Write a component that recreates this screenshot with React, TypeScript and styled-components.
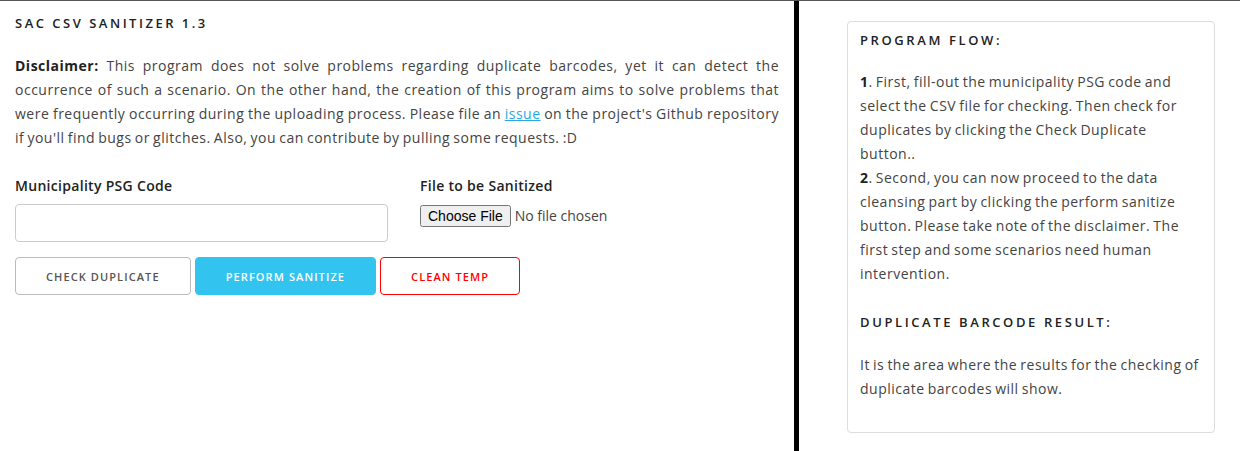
import { FC } from 'react';
import styled, { createGlobalStyle, css } from 'styled-components';

const GlobalStyle = createGlobalStyle`
  html, body {
    margin: 0;
    padding: 0;
    background: #fff;
  }
  body {
    font-family: 'Open Sans', Lato, sans-serif;
    font-size: 14px;
    letter-spacing: 0.3px;
    color: #444;
  }
  * {
    box-sizing: border-box;
  }
`;

// body copy set a touch looser, with tighter word gaps
const bodyCopy = css`
  line-height: 24px;
  letter-spacing: 0.5px;
  word-spacing: -1px;

  b {
    font-weight: 700;
    color: #222;
  }
`;

const Page = styled.div`
  display: grid;
  grid-template-columns: 794px 5px 1fr;
  min-height: 451px;
  border-top: 1px solid #555;
`;

const Divider = styled.div`
  background: #000;
`;

const Main = styled.section`
  padding: 11px 15px 0 15px;
`;

const Title = styled.h1`
  margin: 0;
  font-size: 13px;
  line-height: 22px;
  font-weight: 600;
  letter-spacing: 2.5px;
  color: #222;
`;

const Disclaimer = styled.p`
  ${bodyCopy}
  margin: 20px 0 0;
  text-align: justify;
  width: 764px;

  a {
    color: #2aa9e0;
    text-decoration: underline;
  }
`;

const FormRow = styled.div`
  display: grid;
  grid-template-columns: 373px 1fr;
  column-gap: 32px;
  margin-top: 26px;
`;

const Field = styled.div`
  display: flex;
  flex-direction: column;
  gap: 8px;
`;

const Label = styled.label`
  font-size: 14px;
  line-height: 20px;
  font-weight: 600;
  color: #222;
`;

const TextInput = styled.input`
  height: 38px;
  border: 1px solid #ccc;
  border-radius: 4px;
  padding: 0 12px;
  font: inherit;
`;

const FileInput = styled.input`
  font: inherit;
  color: #444;
  margin-top: 1px;
`;

const Actions = styled.div`
  display: flex;
  gap: 4px;
  margin-top: 15px;
`;

type Variant = 'default' | 'primary' | 'danger';

const Button = styled.button<{ $variant?: Variant }>`
  height: 38px;
  padding: 0 30px;
  border-radius: 4px;
  font-family: inherit;
  font-size: 11px;
  font-weight: 600;
  letter-spacing: 1.1px;
  text-transform: uppercase;
  cursor: pointer;
  background: #fff;
  border: 1px solid #bbb;
  color: #555;

  ${({ $variant }) => $variant === 'primary' && css`
    background: #33c3ef;
    border-color: #33c3ef;
    color: #fff;
  `}

  ${({ $variant }) => $variant === 'danger' && css`
    border-color: #f00;
    color: #f00;
  `}
`;

const Aside = styled.aside`
  padding: 20px 25px 0 48px;
`;

const Card = styled.div`
  border: 1px solid #ddd;
  border-radius: 4px;
  height: 412px;
  padding: 8px 15px 0 12px;
`;

const CardHeading = styled.h2<{ $top?: number }>`
  margin: ${({ $top = 0 }) => $top}px 0 0;
  font-size: 13px;
  line-height: 20px;
  font-weight: 600;
  letter-spacing: 2.6px;
  color: #222;
`;

const CardText = styled.p<{ $top: number }>`
  ${bodyCopy}
  margin: ${({ $top }) => $top}px 0 0;
`;

const App: FC = () => {
  return <>
    <GlobalStyle />
    <Page>
      <Main>
        <Title>SAC CSV SANITIZER 1.3</Title>
        <Disclaimer>
          <b>Disclaimer:</b> This program does not solve problems regarding duplicate barcodes, yet it can detect the occurrence of such a scenario. On the other hand, the creation of this program aims to solve problems that were frequently occurring during the uploading process. Please file an <a href="#">issue</a> on the project's Github repository if you'll find bugs or glitches. Also, you can contribute by pulling some requests. :D
        </Disclaimer>

        <FormRow>
          <Field>
            <Label htmlFor="psg">Municipality PSG Code</Label>
            <TextInput id="psg" type="text" />
          </Field>
          <Field>
            <Label htmlFor="csv">File to be Sanitized</Label>
            <FileInput id="csv" type="file" />
          </Field>
        </FormRow>

        <Actions>
          <Button>Check Duplicate</Button>
          <Button $variant="primary">Perform Sanitize</Button>
          <Button $variant="danger">Clean Temp</Button>
        </Actions>
      </Main>

      <Divider />

      <Aside>
        <Card>
          <CardHeading>PROGRAM FLOW:</CardHeading>
          <CardText $top={20}>
            <b>1</b>. First, fill-out the municipality PSG code and select the CSV file for checking. Then check for duplicates by clicking the Check Duplicate button..
            <br />
            <b>2</b>. Second, you can now proceed to the data cleansing part by clicking the perform sanitize button. Please take note of the disclaimer. The first step and some scenarios need human intervention.
          </CardText>
          <CardHeading $top={26}>DUPLICATE BARCODE RESULT:</CardHeading>
          <CardText $top={21}>
            It is the area where the results for the checking of duplicate barcodes will show.
          </CardText>
        </Card>
      </Aside>
    </Page>
  </>;
};

export default App;
